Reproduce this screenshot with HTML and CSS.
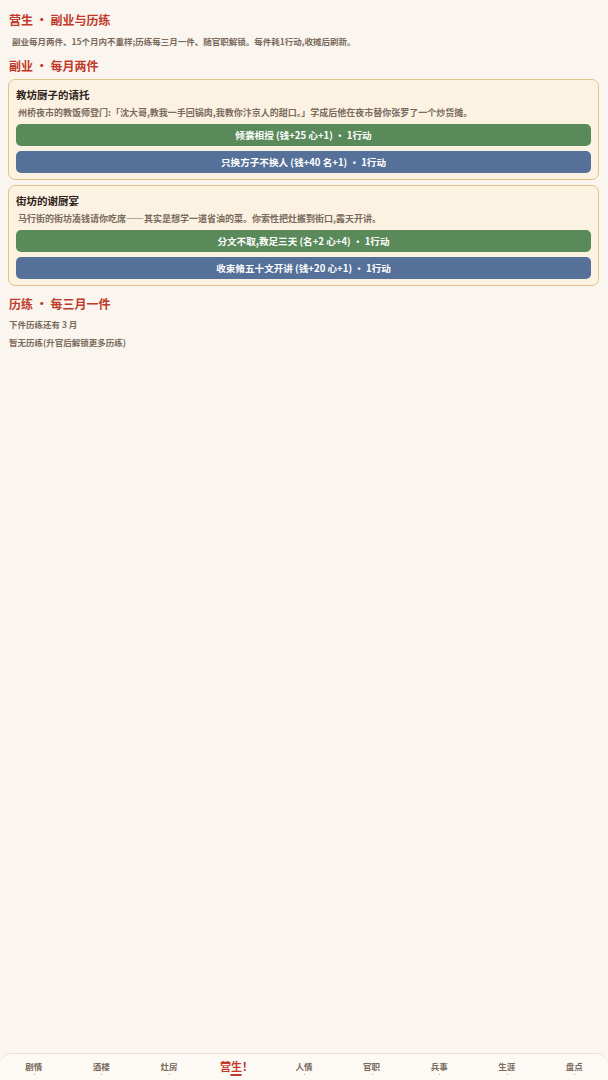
FILE: index.html
```html
<!DOCTYPE html>
<html lang="zh-CN">
<head>
    <meta charset="UTF-8">
    <meta name="viewport" content="width=device-width, initial-scale=1.0">
    <title>营生</title>
    <link rel="stylesheet" href="styles.css">
</head>
<body>
    <main class="page">
        <h2 class="sec-title">营生 · 副业与历练</h2>
        <p class="note">副业每月两件、15个月内不重样;历练每三月一件、随官职解锁。每件耗1行动,收摊后刷新。</p>

        <h2 class="sec-title gap">副业 · 每月两件</h2>

        <!-- side jobs -->
        <div class="card">
            <div class="card-title">教坊厨子的请托</div>
            <p class="card-desc">州桥夜市的教饭师登门:「沈大哥,教我一手回锅肉,我教你汴京人的甜口。」学成后他在夜市替你张罗了一个炒货摊。</p>
            <button class="choice green">倾囊相授 (钱+25 心+1) · 1行动</button>
            <button class="choice blue">只换方子不换人 (钱+40 名+1) · 1行动</button>
        </div>
        <div class="card">
            <div class="card-title">街坊的谢厨宴</div>
            <p class="card-desc">马行街的街坊凑钱请你吃席——其实是想学一道省油的菜。你索性把灶搬到街口,露天开讲。</p>
            <button class="choice green">分文不取,教足三天 (名+2 心+4) · 1行动</button>
            <button class="choice blue">收束脩五十文开讲 (钱+20 心+1) · 1行动</button>
        </div>

        <h2 class="sec-title gap">历练 · 每三月一件</h2>
        <p class="note flat">下件历练还有 3 月</p>
        <p class="note flat">暂无历练(升官后解锁更多历练)</p>
    </main>

    <nav class="tabbar">
        <div class="tab">剧情</div>
        <div class="tab">酒楼</div>
        <div class="tab">灶房</div>
        <div class="tab active">营生！</div>
        <div class="tab">人情</div>
        <div class="tab">官职</div>
        <div class="tab">兵事</div>
        <div class="tab">生涯</div>
        <div class="tab">盘点</div>
    </nav>
</body>
</html>
```

FILE: styles.css
```css
body {
    margin: 0;
    background-color: #faf5ee;
    font-family: "Noto Sans CJK SC", "Noto Sans", sans-serif;
    display: flex;
    flex-direction: column;
    min-height: 100vh;
}
.page {
    flex: 1;
    padding: 11px 9px 0 8px;
}
.sec-title {
    margin: 0 0 0 1px;
    font-size: 12px;
    line-height: 18px;
    font-weight: 700;
    color: #c0392b;
}
.sec-title.gap {
    margin-top: 9px;
}
.note {
    margin: 5px 0 0 4px;
    font-size: 8.5px;
    line-height: 14px;
    font-weight: 700;
    color: #7a6b5d;
}
.note.flat {
    margin: 4px 0 0 1px;
}
.card {
    margin-top: 4px;
    padding: 7px 7px 6px 7px;
    background-color: #fcf2e2;
    border: 1px solid #e2c386;
    border-radius: 7px;
}
.card + .card {
    margin-top: 5px;
}
.card-title {
    font-size: 10.5px;
    line-height: 16px;
    font-weight: 700;
    color: #2e241c;
}
.card-desc {
    margin: 3px 0 0 2px;
    font-size: 9px;
    line-height: 14px;
    font-weight: 700;
    color: #7a6b5d;
}
.choice {
    display: block;
    width: 100%;
    height: 22px;
    margin-top: 5px;
    border: none;
    border-radius: 5px;
    font-family: inherit;
    font-size: 9.6px;
    font-weight: 700;
    color: #ffffff;
}
.card-desc + .choice {
    margin-top: 4px;
}
.choice.green {
    background-color: #5a8a5a;
}
.choice.blue {
    background-color: #557099;
}
.tabbar {
    display: flex;
    height: 26px;
    background-color: #fdfaf6;
    border-top: 1px solid #e8dfcf;
    border-radius: 12px 12px 0 0;
}
.tab {
    flex: 1;
    position: relative;
    text-align: center;
    font-size: 8.5px;
    line-height: 24px;
    font-weight: 700;
    color: #7a6b5d;
}
.tab::after {
    content: "";
    position: absolute;
    left: 50%;
    bottom: 5px;
    width: 1px;
    height: 1px;
    background-color: #b9ad9f;
}
.tab.active {
    font-size: 11px;
    color: #c0392b;
}
.tab.active::after {
    width: 11px;
    height: 2px;
    bottom: 4px;
    transform: translateX(-50%);
    background-color: #c0392b;
}
```
